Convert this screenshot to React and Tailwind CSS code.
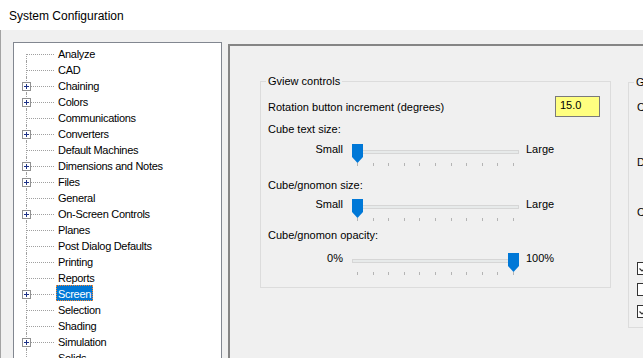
import React from "react";

const treeItems = [
  { label: "Analyze" },
  { label: "CAD" },
  { label: "Chaining", expandable: true },
  { label: "Colors", expandable: true },
  { label: "Communications" },
  { label: "Converters", expandable: true },
  { label: "Default Machines" },
  { label: "Dimensions and Notes", expandable: true },
  { label: "Files", expandable: true },
  { label: "General" },
  { label: "On-Screen Controls", expandable: true },
  { label: "Planes" },
  { label: "Post Dialog Defaults" },
  { label: "Printing" },
  { label: "Reports" },
  { label: "Screen", expandable: true, selected: true },
  { label: "Selection" },
  { label: "Shading" },
  { label: "Simulation", expandable: true },
  { label: "Solids" },
];

const PlusBox = () => (
  <svg className="absolute left-[8px] top-[5px]" width="9" height="9" viewBox="0 0 9 9">
    <rect x="0.5" y="0.5" width="8" height="8" fill="#fff" stroke="#919191" />
    <path d="M2 4.5h5M4.5 2v5" stroke="#1e3287" strokeWidth="1" />
  </svg>
);

const TreeRow = ({ label, expandable, selected, first }) => (
  <div className="flex h-4 items-start">
    <div className="relative h-4 w-[42px] shrink-0">
      <span
        className={`absolute bottom-0 left-[12px] w-0 border-l border-dotted border-[#a0a0a0] ${
          first ? "top-[9px]" : "top-0"
        }`}
      />
      <span className="absolute left-[13px] top-[9px] h-0 w-[27px] border-t border-dotted border-[#a0a0a0]" />
      {expandable && <PlusBox />}
    </div>
    {selected ? (
      <span className="h-4 border border-dotted border-[#ff8728] bg-[#0078d7] px-[1px] leading-[16px] whitespace-nowrap text-white">
        {label}
      </span>
    ) : (
      <span className="h-4 px-[2px] leading-[18px] whitespace-nowrap">{label}</span>
    )}
  </div>
);

const Thumb = ({ left }) => (
  <svg
    className={`absolute top-[3px] ${left ? "left-[156px]" : "left-0"}`}
    width="11"
    height="19"
    viewBox="0 0 11 19"
  >
    <polygon points="0,0 11,0 11,13 5.5,19 0,13" fill="#0078d7" />
  </svg>
);

const Slider = ({ min, max, atEnd }) => (
  <div className="flex h-[25px] items-start">
    <div className="w-[75px] shrink-0 text-right leading-4">{min}</div>
    <div className="relative ml-[9px] h-[25px] w-[167px] shrink-0">
      <div className="absolute left-0 right-0 top-[9px] h-[4px] border border-[#d6d6d6] bg-[#e7eaea]" />
      <Thumb left={atEnd} />
      <div className="absolute left-[5px] right-[5px] top-[22px] flex justify-between">
        {Array.from({ length: 11 }).map((_, i) => (
          <span key={i} className="h-[3px] w-px bg-[#b4b4b4]" />
        ))}
      </div>
    </div>
    <div className="ml-[7px] leading-4">{max}</div>
  </div>
);

const Checkbox = ({ checked, className }) => (
  <div className={`h-[13px] w-[13px] border border-[#333] bg-white ${className}`}>
    {checked && (
      <svg width="11" height="11" viewBox="0 0 11 11">
        <path d="M1.5 5.5l2.5 2.5 5.5-5.5" fill="none" stroke="#333" strokeWidth="1.2" />
      </svg>
    )}
  </div>
);

const App = () => {
  return (
    <div className="flex h-[358px] w-[643px] flex-col overflow-hidden bg-[#f0f0f0] font-['Liberation_Sans',sans-serif] text-[11px] text-black">
      <div className="flex h-[30px] shrink-0 items-center bg-white pl-[9px] pt-[2px] text-[12px]">
        System Configuration
      </div>

      <div className="flex flex-1 border-l border-[#a3a3a3]">
        {/* tree */}
        <div className="ml-[12px] mt-[12px] w-[209px] shrink-0 border border-[#828790] bg-white pt-[2px] tracking-[-0.3px]">
          {treeItems.map((item, i) => (
            <TreeRow key={item.label} {...item} first={i === 0} />
          ))}
        </div>

        {/* settings page */}
        <div className="ml-[6px] mt-[14px] flex flex-1 items-start border-l-2 border-t-2 border-[#858585] bg-[#f0f0f0]">
          <div className="relative ml-[30px] mt-[35px] h-[207px] w-[351px] shrink-0 border border-[#dcdcdc]">
            <span className="absolute left-[5px] top-[-9px] bg-[#f0f0f0] px-[2px] leading-[17px]">
              Gview controls
            </span>
            <div className="pl-[7px] pt-[14px]">
              <div className="flex items-center justify-between pr-[10px]">
                <span className="leading-[18px]">Rotation button increment (degrees)</span>
                <div className="flex h-[21px] w-[45px] items-center border border-[#7a7a7a] bg-[#ffff80] pb-[2px] pl-[4px]">
                  15.0
                </div>
              </div>
              <div className="mt-[4px] h-4 leading-[17px]">Cube text size:</div>
              <div className="mt-[4px]">
                <Slider min="Small" max="Large" />
              </div>
              <div className="mt-[11px] h-4 leading-[17px]">Cube/gnomon size:</div>
              <div className="mt-[3px]">
                <Slider min="Small" max="Large" />
              </div>
              <div className="mt-[6px] h-4 leading-[17px]">Cube/gnomon opacity:</div>
              <div className="mt-[7px]">
                <Slider min="0%" max="100%" atEnd />
              </div>
            </div>
          </div>

          <div className="relative ml-[17px] mt-[36px] h-[246px] w-[200px] shrink-0 border border-[#dcdcdc]">
            <span className="absolute left-[5px] top-[-9px] bg-[#f0f0f0] px-[2px] leading-[17px]">
              General
            </span>
            <div className="pl-[8px] pt-[16px]">
              <div className="h-4 leading-[17px]">Cube</div>
              <div className="mt-[39px] h-4 leading-[17px]">Default</div>
              <div className="mt-[34px] h-4 leading-[17px]">Color</div>
              <Checkbox checked className="mt-[42px]" />
              <Checkbox className="mt-[8px]" />
              <Checkbox checked className="mt-[9px]" />
            </div>
          </div>
        </div>
      </div>
    </div>
  );
};

export default App;
